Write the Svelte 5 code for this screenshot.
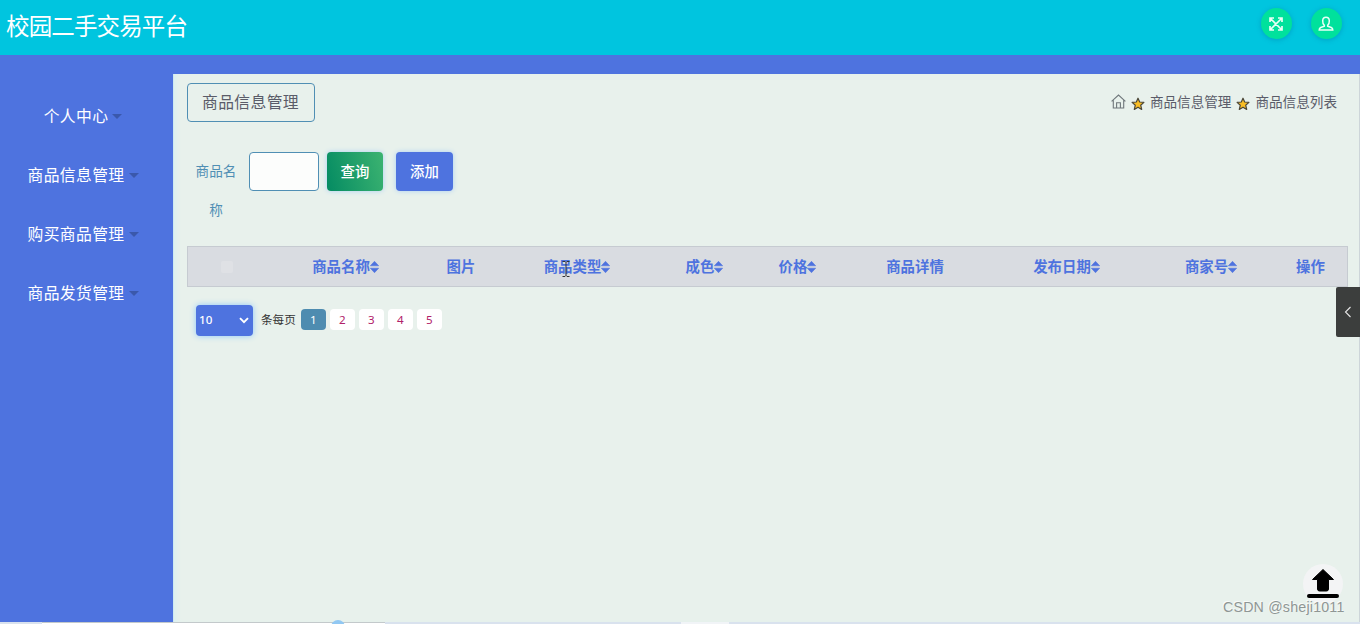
<script>
  const menu = ['个人中心', '商品信息管理', '购买商品管理', '商品发货管理'];
  const columns = [
    { label: '商品名称', sort: true },
    { label: '图片' },
    { label: '商品类型', sort: true },
    { label: '成色', sort: true },
    { label: '价格', sort: true },
    { label: '商品详情' },
    { label: '发布日期', sort: true },
    { label: '商家号', sort: true },
    { label: '操作' }
  ];
  const pages = [1, 2, 3, 4, 5];
</script>

{#snippet star()}
  <svg class="star" width="14" height="14" viewBox="0 0 14 14"><path d="M7 1.200 8.700 5l4.200.4-3.200 2.800 1 4.200L7 10.200l-3.700 2.200 1-4.200L1.100 5.400 5.300 5Z" fill="#f9bd24" stroke="#4a4638" stroke-width="1.200" stroke-linejoin="round" /></svg>
{/snippet}

<div class="page">
  <header>
    <h1>校园二手交易平台</h1>
    <div class="tools">
      <button class="round" aria-label="全屏">
        <svg width="16" height="16" viewBox="0 0 16 16" fill="none" stroke="#e9fff6" stroke-width="1.700"><path d="M2 6V2h4M10 2h4v4M14 10v4h-4M6 14H2v-4M2.500 2.500l11 11M13.500 2.500l-11 11" /></svg>
      </button>
      <button class="round" aria-label="用户">
        <svg width="16" height="16" viewBox="0 0 16 16" fill="none" stroke="#e9fff6" stroke-width="1.500"><path d="M6.300 9.200C5 8 4.600 6.300 4.700 4.700 4.800 2.500 6 1.200 8 1.200s3.200 1.300 3.300 3.500c.1 1.600-.3 3.300-1.600 4.500v1.100l3.600 1.200c1 .4 1.500 1.200 1.500 2.500H1.200c0-1.300.5-2.100 1.500-2.500l3.600-1.200Z" /></svg>
      </button>
    </div>
  </header>

  <div class="body">
    <nav>
      {#each menu as item}
        <div class="item"><span>{item}</span><i class="caret"></i></div>
      {/each}
    </nav>

    <main>
      <div class="heading">
        <div class="title">商品信息管理</div>
        <div class="crumbs">
          <svg class="home" width="15" height="15" viewBox="0 0 15 15" fill="none" stroke="#6f777b" stroke-width="1.100"><path d="M.6 7.300 7.500 1l6.900 6.300M2.300 6v8h10.400V6M5.600 14V8.800h3.800V14" /></svg>
          {@render star()}<span>商品信息管理</span>
          {@render star()}<span>商品信息列表</span>
        </div>
      </div>

      <div class="search">
        <label for="name">商品名称</label>
        <input id="name" type="text" />
        <button class="btn query">查询</button>
        <button class="btn add">添加</button>
      </div>

      <div class="thead">
        <div class="cell"><i class="check"></i></div>
        {#each columns as col}
          <div class="cell">
            <span>{col.label}</span>{#if col.sort}<svg width="9" height="12" viewBox="0 0 9 12" fill="#4e73df"><path d="M4.500.3 8.700 4.800H.3ZM4.500 11.700.3 7.200h8.400Z" stroke="#4e73df" stroke-width=".5" stroke-linejoin="round" /></svg>{/if}
          </div>
        {/each}
      </div>

      <div class="pager">
        <div class="select"><span>10</span>
          <svg width="10" height="7" viewBox="0 0 10 7" fill="none" stroke="#fff" stroke-width="1.900"><path d="m1 1.200 4 4 4-4" /></svg>
        </div>
        <span class="per">条每页</span>
        {#each pages as p}
          <span class="num" class:active={p === 1}>{p}</span>
        {/each}
      </div>
    </main>
  </div>

  <footer><i class="a"></i><i class="b"></i><i class="c"></i><i class="d"></i><i class="e"></i></footer>

  <div class="bubble"></div>
  <div class="drawer"><svg width="8" height="12" viewBox="0 0 8 12" fill="none" stroke="#e6e6e6" stroke-width="1.100"><path d="M6.500 1 1.500 6l5 5" /></svg></div>
  <div class="top"><svg width="40" height="40" viewBox="0 0 40 40"><circle cx="20" cy="20" r="20" fill="#f3f4f5" /><path d="M20 5.500 30.500 15.500H25.500V25q0 2-2 2h-7q-2 0-2-2v-9.500H9.500Z" fill="#000" stroke="#000" stroke-linejoin="round" /><rect x="4" y="30" width="32" height="4" rx="2" fill="#000" /></svg></div>
  <div class="mark">CSDN @sheji1011</div>
  <svg class="cursor" width="8" height="16" viewBox="0 0 8 16" fill="none" stroke="#333"><path d="M.5.5h2.500l1 1 1-1h2.500M4 1.500v13M.5 15.500h2.500l1-1 1 1h2.500" /></svg>
</div>

<style>
  :global(body) { margin: 0; overflow: hidden; }
  * { box-sizing: border-box; }
  .page { position: relative; width: 1360px; height: 624px; overflow: hidden; display: flex; flex-direction: column; background: #4e73df; font-family: 'Noto Sans', 'Noto Sans CJK SC', sans-serif; color: #5a5c69; }
  button { border: 0; padding: 0; font-family: inherit; }
  header { height: 55px; flex: none; background: #00c5df; display: flex; justify-content: space-between; align-items: flex-start; padding: 0 18px 0 6px; }
  h1 { margin: 0; color: #fff; font-size: 23.500px; font-weight: 400; line-height: 52px; letter-spacing: -.87px; }
  .tools { display: flex; gap: 19px; padding-top: 8px; }
  .round { width: 31px; height: 31px; border-radius: 50%; background: #00e19c; display: flex; align-items: center; justify-content: center; padding-right: 1px; box-shadow: 0 1px 5px rgba(0, 100, 150, .35); }
  .body { display: flex; flex: 1; min-height: 0; padding-top: 19px; }
  nav { width: 173px; flex: none; padding-top: 13px; }
  .item { height: 59px; display: flex; align-items: center; justify-content: center; gap: 4px; padding-right: 7px; color: #fff; font-size: 15.800px; letter-spacing: .37px; }
  .item span { padding-bottom: 3px; }
  .caret { border: 5px solid transparent; border-top-color: #3a58ac; border-bottom: 0; margin-top: -1px; }
  main { flex: 1; min-width: 0; background: #e8f1ec; border-left: 1px solid #cfe9f0; border-right: 1px solid #cdd5d9; padding: 9px 11px 0 13px; box-shadow: inset 5px 0 6px -4px #d5f1f2; }
  .heading { display: flex; justify-content: space-between; align-items: flex-start; }
  .title { width: 128px; height: 39px; border: 1px solid #508fb4; border-radius: 4px; display: flex; align-items: center; justify-content: center; padding: 0 1px 3px 0; font-size: 15.800px; letter-spacing: .37px; }
  .crumbs { display: flex; align-items: center; height: 38px; padding-right: 11px; font-size: 13.600px; white-space: nowrap; }
  .crumbs span { padding-bottom: 2px; }
  .home { margin-right: 5px; margin-top: -2px; }
  .star { margin-right: 5px; margin-top: 3px; }
  span + .star { margin-left: 5px; }
  .search { display: flex; align-items: flex-start; height: 94px; margin-top: 30px; padding-left: 8px; }
  label { width: 42px; margin: -1px 12px 0 0; font-size: 13.600px; line-height: 39px; text-align: center; color: #508fb4; }
  input { width: 70px; height: 39px; border: 1px solid #508fb4; border-radius: 4px; background: #fcfdfc; padding: 0 10px; }
  .btn { height: 39px; border-radius: 4px; color: #fff; font-size: 14.400px; font-weight: 500; box-shadow: 0 0 5px #a9cff2; line-height: 39px; }
  .query { width: 56px; margin-left: 8px; background: linear-gradient(75deg, #048b62, #3cb371); }
  .add { width: 57px; margin-left: 13px; background: #4e73df; }
  .thead { display: grid; grid-template-columns: 77px 161px 70px 162px 93px 93px 142px 161px 128px 71px; height: 41px; background: #d9dce1; border: 1px solid #c6cbd1; }
  .cell { display: flex; align-items: center; justify-content: center; color: #4e73df; font-size: 14.400px; font-weight: 700; white-space: nowrap; }
  .cell span { padding-bottom: 2px; }
  .check { width: 12px; height: 12px; border-radius: 2px; background: #dfe1e5; }
  .pager { display: flex; align-items: center; height: 31px; margin-top: 18px; padding-left: 9px; font-size: 11.600px; }
  .select { width: 57px; height: 31px; border-radius: 4px; background: #4e73df; color: #fff; display: flex; align-items: center; justify-content: space-between; padding: 0 4px 0 3px; box-shadow: 0 0 6px #8ec8fa; }
  .select span { padding-bottom: 2px; font-weight: 500; }
  .per { color: #333; margin: 0 5px 0 8px; padding-bottom: 3px; white-space: nowrap; }
  .num { width: 25px; height: 21px; margin: -2px 4px 0 0; padding-bottom: 1px; border-radius: 4px; background: #fff; color: #b12069; display: flex; align-items: center; justify-content: center; }
  .num.active { background: #4e8cb0; color: #fff; }
  footer { height: 2px; flex: none; display: flex; background: #d9e2ee; }
  .a { width: 42px; }
  .b { width: 343px; background: #fff; border-top: 1px solid #c3c9cb; }
  .c { width: 296px; }
  .d { width: 48px; background: #f1f4f7; }
  .bubble { position: absolute; left: 331px; top: 620px; width: 14px; height: 14px; border-radius: 50%; background: #91c8f3; }
  .drawer { position: absolute; right: 0; top: 287px; width: 24px; height: 50px; border-radius: 2px 0 0 2px; background: #3c3e3d; display: flex; align-items: center; justify-content: center; }
  .top { position: absolute; left: 1303px; top: 564px; width: 40px; height: 40px; }
  .mark { position: absolute; left: 1223px; top: 598px; font: 14.200px/18px 'Liberation Sans', sans-serif; letter-spacing: .22px; color: #8f9694; text-shadow: -1px -1px 0 #f8fbfa; white-space: nowrap; }
  .cursor { position: absolute; left: 562px; top: 261px; }
</style>
